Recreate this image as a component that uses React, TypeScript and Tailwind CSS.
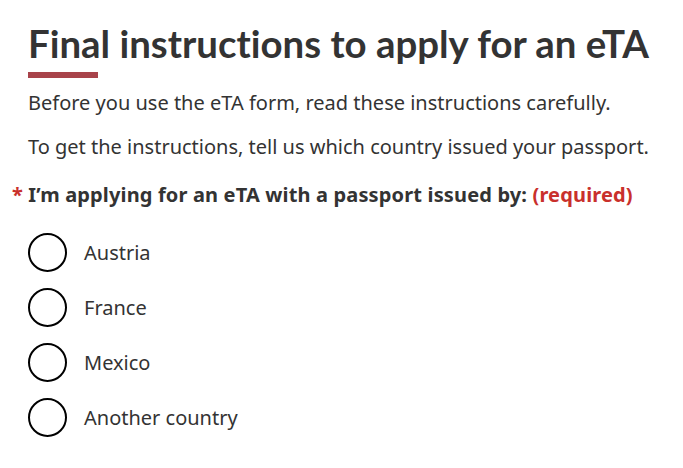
export default function App() {
  const countries = ["Austria", "France", "Mexico", "Another country"];
  return (
    <div className="min-h-screen bg-white px-[28px] pt-[22px] text-[#333]" style={{ fontFamily: '"Noto Sans", sans-serif' }}>
      <h1 className="text-[38.4px] font-bold leading-[42px] text-[#333] [font-variant-ligatures:none]" style={{ fontFamily: 'Lato, sans-serif' }}>
        Final instructions to apply for an eTA
      </h1>
      <div className="mt-[8px] h-[6px] w-[70px] bg-[#a8434a]" />
      <p className="mt-[11px] text-[20px] leading-[28px]">Before you use the eTA form, read these instructions carefully.</p>
      <p className="mt-[16px] text-[20px] leading-[28px]">To get the instructions, tell us which country issued your passport.</p>
      <fieldset className="mt-[20px]">
        <legend className="-ml-[16px] text-[20px] font-bold leading-[28px] tracking-[0.15px]">
          <span className="text-[#c9302c]">* </span>
          I’m applying for an eTA with a passport issued by: <span className="text-[#c9302c]">(required)</span>
        </legend>
        <div className="mt-[24px] flex flex-col gap-[16px]">
          {countries.map((c) => (
            <label key={c} className="flex items-center gap-[17px]">
              <span className="h-[39px] w-[39px] rounded-full border-2 border-black" />
              <span className="text-[20px]">{c}</span>
            </label>
          ))}
        </div>
      </fieldset>
    </div>
  );
}
